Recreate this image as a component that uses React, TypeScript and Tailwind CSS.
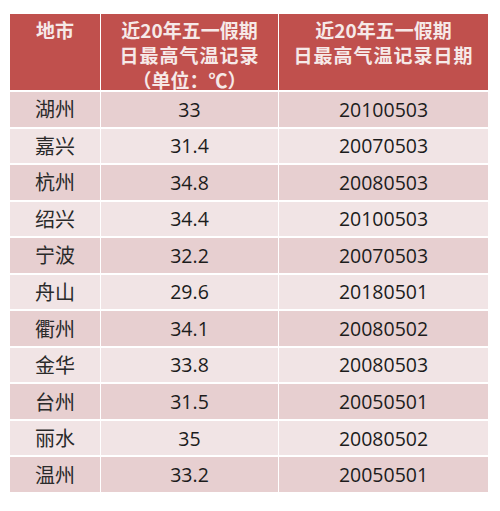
import React from 'react';

const rows: [string, string, string][] = [
  ['湖州', '33', '20100503'],
  ['嘉兴', '31.4', '20070503'],
  ['杭州', '34.8', '20080503'],
  ['绍兴', '34.4', '20100503'],
  ['宁波', '32.2', '20070503'],
  ['舟山', '29.6', '20180501'],
  ['衢州', '34.1', '20080502'],
  ['金华', '33.8', '20080503'],
  ['台州', '31.5', '20050501'],
  ['丽水', '35', '20080502'],
  ['温州', '33.2', '20050501'],
];

const head =
  "bg-[#c0504d] text-[#f6e9e8] text-[19px] font-bold text-center pt-[3px] leading-[25px] font-['Noto_Sans_CJK_SC',sans-serif]";

export default function App() {
  return (
    <div className="w-[500px] h-[511px] bg-white pt-[14px] pl-[10px]">
      <div className="grid grid-cols-[90px_177px_209px] grid-rows-[76px_repeat(11,1fr)] gap-x-[1px] gap-y-[2px] h-[478px] w-[478px] bg-white">
        <div className={head}>地市</div>
        <div className={head}>
          <div>近20年五一假期</div>
          <div className="tracking-[1px]">日最高气温记录</div>
          <div>（单位：℃）</div>
        </div>
        <div className={head}>
          <div>近20年五一假期</div>
          <div className="tracking-[1px]">日最高气温记录日期</div>
        </div>
        {rows.map(([city, temp, date], i) => {
          const bg = i % 2 === 0 ? 'bg-[#e7cfd0]' : 'bg-[#f1e4e5]';
          return (
            <React.Fragment key={city}>
              <div className={`${bg} flex items-center justify-center text-[20px] text-[#2a2a2a] font-['Noto_Sans_CJK_SC',sans-serif]`}>
                {city}
              </div>
              <div className={`${bg} flex items-center justify-center text-[19.5px] text-[#1c1c1c] font-['Open_Sans',sans-serif]`}>
                {temp}
              </div>
              <div className={`${bg} flex items-center justify-center text-[19.5px] text-[#1c1c1c] font-['Open_Sans',sans-serif]`}>
                {date}
              </div>
            </React.Fragment>
          );
        })}
      </div>
    </div>
  );
}
